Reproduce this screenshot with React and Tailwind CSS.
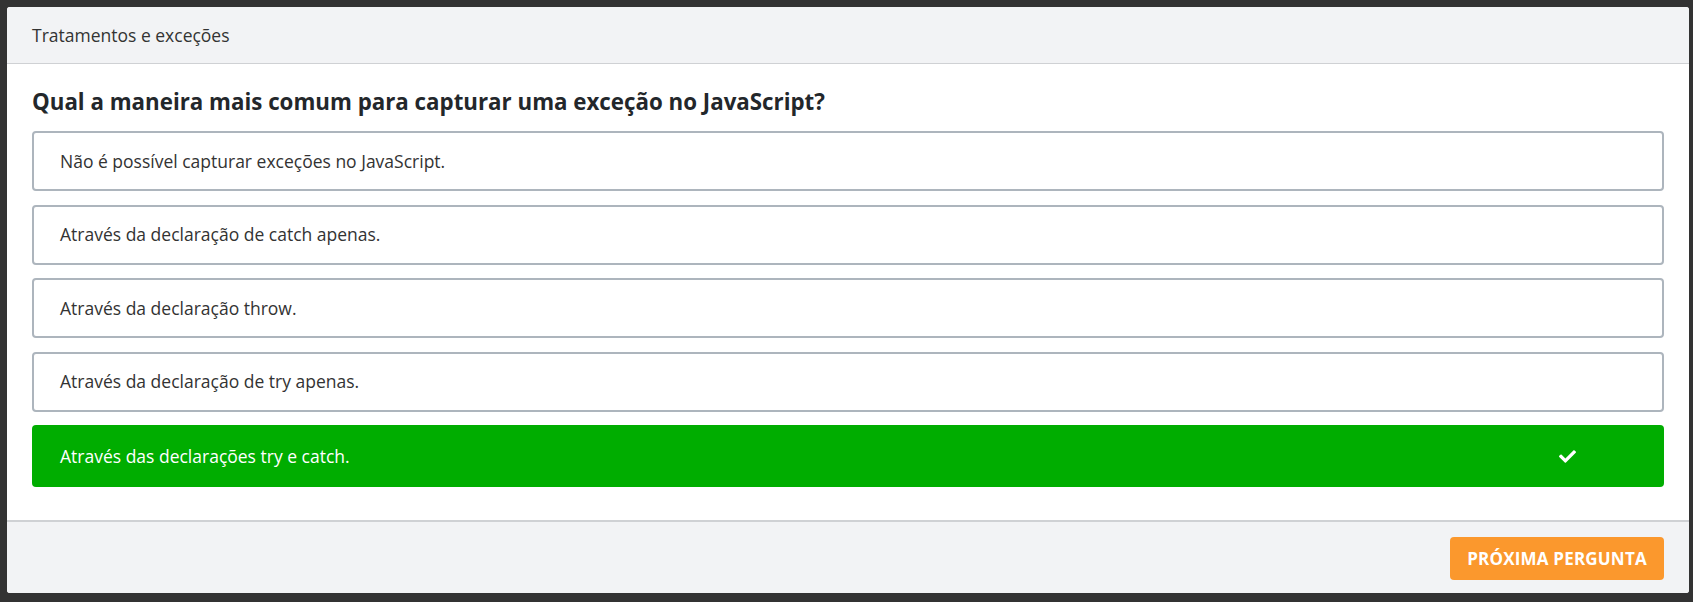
import React from "react";
import { FaCheck } from "react-icons/fa";

const options = [
  "Não é possível capturar exceções no JavaScript.",
  "Através da declaração de catch apenas.",
  "Através da declaração throw.",
  "Através da declaração de try apenas.",
];

export default function App() {
  return (
    <div
      className="w-[1693px] h-[602px] bg-[#333333] pt-[7px] pl-[7px] pr-[4px] pb-[9px]"
      style={{ fontFamily: '"Open Sans", "Noto Sans", sans-serif' }}
    >
      <div className="h-full bg-white rounded-[3px] overflow-hidden flex flex-col">
        <div className="h-[57px] shrink-0 bg-[#f2f3f5] border-b border-[#cfd1d4] flex items-center px-[25px] text-[17.5px] text-[#333333]">
          Tratamentos e exceções
        </div>
        <div className="flex-1 px-[25px] pt-[23px]">
          <h1 className="text-[22.3px] font-bold text-[#23272b] leading-[30px] mb-[14px]">
            Qual a maneira mais comum para capturar uma exceção no JavaScript?
          </h1>
          <div className="flex flex-col gap-[13.5px]">
            {options.map((o) => (
              <div
                key={o}
                className="h-[60px] border-2 border-[#adb5bd] rounded-[4px] flex items-center pl-[26px] text-[17.5px] text-[#333333]"
              >
                {o}
              </div>
            ))}
            <div className="h-[62px] bg-[#00ad00] rounded-[4px] flex items-center justify-between pl-[28px] pr-[88px] text-[17.5px] text-white">
              <span>Através das declarações try e catch.</span>
              <FaCheck className="text-white w-[17px] h-[17px]" />
            </div>
          </div>
        </div>
        <div className="h-[73px] shrink-0 bg-[#f2f3f5] border-t-2 border-[#cfd1d4] flex justify-end items-start pt-[15px] px-[25px]">
          <button className="h-[43px] w-[214px] bg-[#fb982d] rounded-[4px] text-white font-bold text-[17px] tracking-[0.2px]">
            PRÓXIMA PERGUNTA
          </button>
        </div>
      </div>
    </div>
  );
}
